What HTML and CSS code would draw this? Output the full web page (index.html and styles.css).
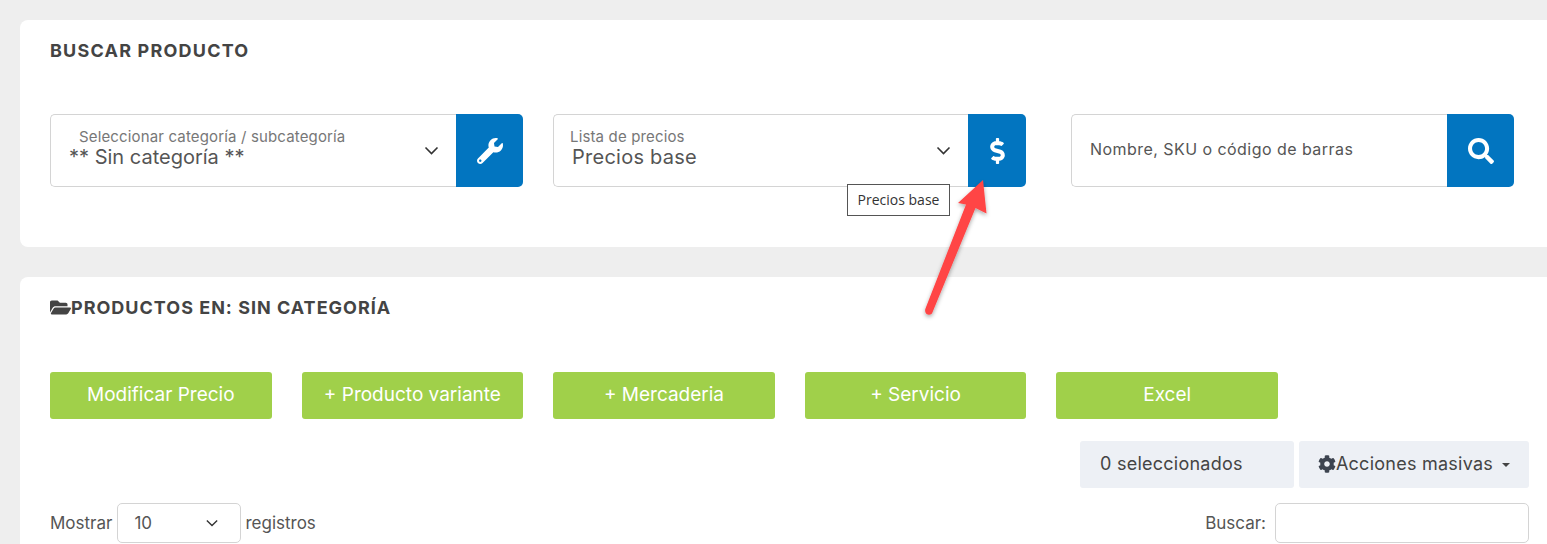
FILE: index.html
```html
<!DOCTYPE html>
<html lang="en">
<head>
  <meta charset="UTF-8">
  <meta name="viewport" content="width=device-width, initial-scale=1">
  <title>Buscar producto</title>
  <link rel="stylesheet" href="styles.css">
</head>
<body>
  <!-- Search card -->
  <section class="card search-card">
    <h2 class="card-title title-search">BUSCAR PRODUCTO</h2>
    <div class="search-row">
      <div class="input-group">
        <div class="select-box">
          <span class="float-label label-category">Seleccionar categoría / subcategoría</span>
          <span class="select-value">** Sin categoría **</span>
          <svg class="chevron" viewBox="0 0 14 9"><path d="M1 1.5l6 6 6-6"/></svg>
        </div>
        <button class="addon" type="button">
          <svg class="icon-wrench" viewBox="0 0 512 512"><path d="M507.73 109.1c-2.24-9.03-13.54-12.09-20.12-5.51l-74.36 74.36-67.88-11.31-11.31-67.88 74.36-74.36c6.62-6.62 3.43-17.9-5.66-20.16-47.38-11.74-99.55.91-136.58 37.93-39.64 39.64-50.55 97.1-34.05 147.2L18.74 402.76c-24.99 24.99-24.99 65.51 0 90.5 24.99 24.99 65.51 24.99 90.5 0l213.21-213.21c50.12 16.71 107.47 5.68 147.37-34.22 37.07-37.07 49.7-89.32 37.91-136.73zM64 472c-13.25 0-24-10.75-24-24 0-13.26 10.75-24 24-24s24 10.74 24 24c0 13.25-10.75 24-24 24z"/></svg>
        </button>
      </div>
      <div class="input-group">
        <div class="select-box">
          <span class="float-label label-price">Lista de precios</span>
          <span class="select-value value-price">Precios base</span>
          <svg class="chevron" viewBox="0 0 14 9"><path d="M1 1.5l6 6 6-6"/></svg>
        </div>
        <button class="addon" type="button">
          <svg class="icon-dollar" viewBox="0 0 288 512"><path d="M209.2 233.4l-108-31.6C88.7 198.2 80 186.5 80 173.5c0-16.3 13.2-29.5 29.5-29.5h66.3c12.2 0 24.2 3.7 34.2 10.5 6.1 4.1 14.3 3.1 19.5-2l34.8-34c7.1-6.9 6.1-18.4-1.8-24.5C238 74.8 207.4 64.1 176 64V16c0-8.8-7.2-16-16-16h-32c-8.8 0-16 7.2-16 16v48h-2.5C45.8 64-5.4 118.7.5 183.6c4.2 46.1 39.4 83.6 83.8 96.6l102.5 30c12.5 3.7 21.2 15.3 21.2 28.3 0 16.3-13.2 29.5-29.5 29.5h-66.3C100 368 88 364.3 78 357.5c-6.1-4.1-14.3-3.1-19.5 2l-34.8 34c-7.1 6.9-6.1 18.4 1.8 24.5 24.5 19.2 55.1 29.9 86.5 30v48c0 8.8 7.2 16 16 16h32c8.8 0 16-7.2 16-16v-48.2c46.6-.9 90.3-28.6 105.7-72.7 21.5-61.6-14.6-124.8-72.5-141.7z"/></svg>
        </button>
        <div class="tooltip">Precios base</div>
      </div>
      <div class="input-group group-search">
        <input class="search-input" type="text" placeholder="Nombre, SKU o código de barras">
        <button class="addon addon-search" type="button">
          <svg class="icon-search" viewBox="0 0 512 512"><path d="M505 442.7L405.3 343c-4.5-4.5-10.6-7-17-7H372c27.6-35.3 44-79.7 44-128C416 93.1 322.9 0 208 0S0 93.1 0 208s93.1 208 208 208c48.3 0 92.7-16.4 128-44v16.3c0 6.4 2.5 12.5 7 17l99.7 99.7c9.4 9.4 24.6 9.4 33.9 0l28.3-28.3c9.4-9.4 9.4-24.6.1-34zM208 336c-70.7 0-128-57.2-128-128 0-70.7 57.2-128 128-128 70.7 0 128 57.2 128 128 0 70.7-57.2 128-128 128z"/></svg>
        </button>
      </div>
    </div>
  </section>

  <!-- Products card -->
  <section class="card products-card">
    <h2 class="card-title">
      <svg class="icon-folder" viewBox="0 0 576 512"><path d="M572.694 292.093L500.27 416.248A63.997 63.997 0 0 1 444.989 448H45.025c-18.523 0-30.064-20.093-20.731-36.093l72.424-124.155A64 64 0 0 1 152 256h399.964c18.523 0 30.064 20.093 20.73 36.093zM152 224h328v-48c0-26.51-21.49-48-48-48H272l-64-64H48C21.49 64 0 85.49 0 112v278.046l69.077-118.418C86.214 242.25 117.989 224 152 224z"/></svg>PRODUCTOS EN: SIN CATEGORÍA
    </h2>
    <div class="action-row">
      <button class="btn-green" type="button">Modificar Precio</button>
      <button class="btn-green" type="button">+ Producto variante</button>
      <button class="btn-green" type="button">+ Mercaderia</button>
      <button class="btn-green" type="button">+ Servicio</button>
      <button class="btn-green" type="button">Excel</button>
    </div>
    <div class="bulk-row">
      <button class="btn-light btn-count" type="button">0 seleccionados</button>
      <button class="btn-light btn-bulk" type="button">
        <svg class="icon-cog" viewBox="0 0 512 512"><path d="M487.4 315.7l-42.6-24.6c4.3-23.2 4.3-47 0-70.2l42.6-24.6c4.9-2.8 7.1-8.6 5.5-14-11.1-35.6-30-67.8-54.7-94.6-3.8-4.1-10-5.1-14.8-2.3L380.8 110c-17.9-15.4-38.5-27.3-60.8-35.1V25.8c0-5.6-3.9-10.5-9.4-11.7-36.7-8.2-74.3-7.8-109.2 0-5.5 1.2-9.4 6.1-9.4 11.7V75c-22.2 7.9-42.8 19.8-60.8 35.1L88.7 85.5c-4.9-2.8-11-1.9-14.8 2.3-24.7 26.7-43.6 58.9-54.7 94.6-1.7 5.4.6 11.2 5.5 14L67.3 221c-4.3 23.2-4.3 47 0 70.2l-42.6 24.6c-4.9 2.8-7.1 8.6-5.5 14 11.1 35.6 30 67.8 54.7 94.6 3.8 4.1 10 5.1 14.8 2.3l42.6-24.6c17.9 15.4 38.5 27.3 60.8 35.1v49.2c0 5.6 3.9 10.5 9.4 11.7 36.7 8.2 74.3 7.8 109.2 0 5.5-1.2 9.4-6.1 9.4-11.7v-49.2c22.2-7.9 42.8-19.8 60.8-35.1l42.6 24.6c4.9 2.8 11 1.9 14.8-2.3 24.7-26.7 43.6-58.9 54.7-94.6 1.5-5.5-.7-11.3-5.6-14.1zM256 336c-44.1 0-80-35.9-80-80s35.9-80 80-80 80 35.9 80 80-35.9 80-80 80z"/></svg>Acciones masivas<span class="caret"></span>
      </button>
    </div>
    <div class="table-controls">
      <div class="length-control">
        <span>Mostrar</span>
        <div class="mini-select">
          <span>10</span>
          <svg class="chevron chevron-small" viewBox="0 0 14 9"><path d="M1 1.5l6 6 6-6"/></svg>
        </div>
        <span>registros</span>
      </div>
      <div class="filter-control">
        <span>Buscar:</span>
        <input class="filter-input" type="text">
      </div>
    </div>
  </section>

  <!-- Red annotation arrow drawn over the page -->
  <svg class="arrow" viewBox="0 0 1547 544">
    <defs>
      <filter id="arrowShadow" x="-30%" y="-30%" width="160%" height="160%">
        <feDropShadow dx="0" dy="2" stdDeviation="2" flood-color="#000" flood-opacity="0.35"/>
      </filter>
    </defs>
    <path filter="url(#arrowShadow)" fill="#ff4444" d="M983 180L986.5 213.5 975.5 208 932 313.5Q929 316 926 313.5 924.500 311 925.500 308.500L966 204.500 958 203Z"/>
  </svg>
</body>
</html>
```

FILE: styles.css
```css
html {
  height: 544px;
  overflow: hidden;
}
body {
  position: relative;
  margin: 0;
  padding: 20px 0 0 20px;
  height: 544px;
  box-sizing: border-box;
  overflow: hidden;
  background-color: #eeeeee;
  font-family: Inter, "Open Sans", sans-serif;
  color: #555;
}
.card {
  width: 1527px;
  box-sizing: border-box;
  padding: 30px 18px 0 30px;
  background: #fff;
  border-radius: 8px 0 0 8px;
}
.search-card {
  height: 227px;
  margin-bottom: 30px;
}
.products-card {
  height: 267px;
  border-radius: 8px 0 0 0;
}
.card-title {
  display: flex;
  align-items: center;
  height: 0;
  margin: 0;
  font-size: 18px;
  font-weight: 700;
  letter-spacing: 1px;
  color: #444;
}
.title-search {
  letter-spacing: 1.2px;
}
.search-row {
  display: flex;
  margin-top: 64px;
}
.input-group {
  position: relative;
  display: flex;
  width: 473px;
  height: 73px;
  margin-right: 30px;
}
.group-search {
  width: 443px;
  margin: 0 0 0 15px;
}
.select-box {
  position: relative;
  flex: 1;
  box-sizing: border-box;
  border: 1px solid #d4d4d4;
  border-right: 0;
  border-radius: 5px 0 0 5px;
}
.float-label {
  position: absolute;
  font-size: 15px;
  letter-spacing: 0.15px;
  color: #777;
  top: 13px;
  line-height: 18px;
}
.label-category {
  left: 28px;
}
.label-price {
  left: 16px;
}
.select-value {
  position: absolute;
  left: 18px;
  top: 29px;
  font-size: 20px;
  line-height: 26px;
  color: #555;
}
.value-price {
  letter-spacing: 0.25px;
}
.chevron {
  position: absolute;
  right: 17px;
  top: 31px;
  width: 15px;
  height: 9px;
  fill: none;
  stroke: #333;
  stroke-width: 1.6;
}
.addon {
  width: 67px;
  padding: 0;
  border: 0;
  border-radius: 0 5px 5px 0;
  background: #0275c0;
  display: flex;
  align-items: center;
  justify-content: center;
}
.input-group:nth-child(2) .addon {
  width: 58px;
}
.addon svg {
  fill: #fff;
}
.icon-wrench {
  width: 26px;
  height: 26px;
}
.icon-dollar {
  width: 15px;
  height: 26px;
}
.icon-search {
  width: 26px;
  height: 26px;
}
.search-input {
  flex: 1;
  min-width: 0;
  box-sizing: border-box;
  padding: 0 18px 4px;
  border: 1px solid #d4d4d4;
  border-right: 0;
  border-radius: 5px 0 0 5px;
  font: 16px Inter, "Open Sans", sans-serif;
  letter-spacing: 0.45px;
}
.search-input::placeholder {
  color: #555;
  opacity: 1;
}
.tooltip {
  position: absolute;
  left: 294px;
  top: 70px;
  box-sizing: border-box;
  width: 103px;
  height: 32px;
  border: 1px solid #555;
  background: #fff;
  font: 14px/30px "Open Sans", sans-serif;
  text-align: center;
  color: #333;
}
.icon-folder {
  width: 21px;
  height: 19px;
  fill: #444;
}
.action-row {
  display: flex;
  gap: 30px;
  margin-top: 65px;
}
.btn-green {
  width: 221.6px;
  height: 47px;
  padding: 0 0 2px;
  border: 0;
  border-radius: 3px;
  background: #a0d04a;
  color: #fff;
  font: 19px Inter, "Open Sans", sans-serif;
}
.bulk-row {
  display: flex;
  justify-content: flex-end;
  gap: 5px;
  margin-top: 22px;
}
.btn-light {
  height: 47px;
  padding: 0 0 3px;
  border: 0;
  border-radius: 3px;
  background: #edf0f5;
  color: #444;
  font: 18px Inter, "Open Sans", sans-serif;
  letter-spacing: 0.25px;
  display: flex;
  align-items: center;
  justify-content: center;
}
.btn-count {
  width: 214px;
  padding-left: 20px;
  justify-content: flex-start;
}
.btn-bulk {
  width: 230px;
}
.icon-cog {
  width: 18px;
  height: 18px;
  margin-top: 2px;
  fill: #3d4450;
}
.caret {
  margin: 3px 0 0 9px;
  border-top: 4px solid #444;
  border-left: 4px solid transparent;
  border-right: 4px solid transparent;
}
.table-controls {
  display: flex;
  justify-content: space-between;
  margin-top: 15px;
  font-size: 17px;
  color: #555;
}
.length-control,
.filter-control {
  display: flex;
  align-items: center;
  gap: 4px;
}
.filter-control {
  gap: 9px;
}
.mini-select {
  position: relative;
  box-sizing: border-box;
  width: 124px;
  height: 40px;
  margin-left: 1px;
  padding-left: 16px;
  line-height: 38px;
  border: 1px solid #d4d4d4;
  border-radius: 5px;
}
.chevron-small {
  top: 15px;
  right: 22px;
  width: 12px;
  height: 8px;
}
.filter-input {
  box-sizing: border-box;
  width: 254px;
  height: 40px;
  border: 1px solid #d4d4d4;
  border-radius: 5px;
}
.arrow {
  position: absolute;
  left: 0;
  top: 0;
  width: 1547px;
  height: 544px;
  pointer-events: none;
}
```
